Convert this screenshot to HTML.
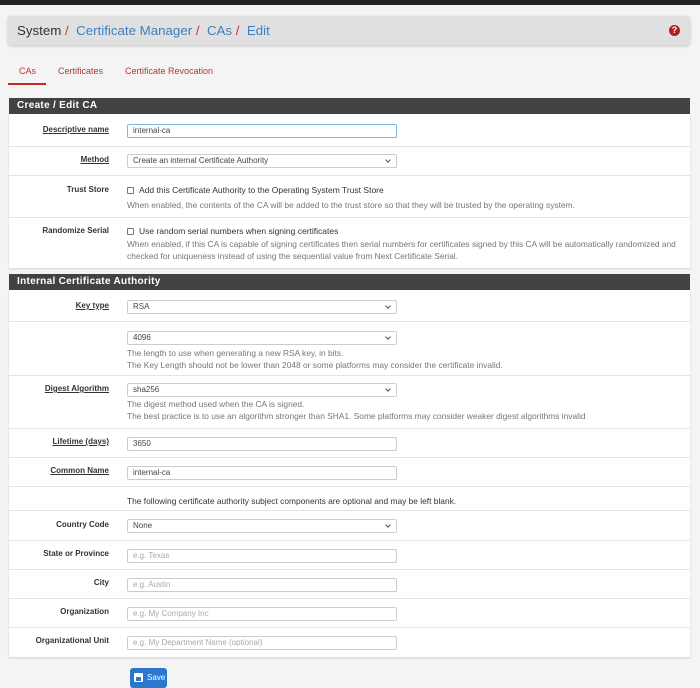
<!DOCTYPE html>
<html><head><meta charset="utf-8"><style>
*{box-sizing:border-box;margin:0;padding:0}
body{width:700px;height:688px;background:#f4f4f4;font-family:"Liberation Sans",sans-serif;position:relative;overflow:hidden;color:#333}
.a{position:absolute}
.top{left:0;top:0;width:700px;height:5px;background:#222}
.bc{left:8px;top:16px;width:682px;height:29px;background:#e0e0e0;border-radius:3px;box-shadow:0 1px 3px rgba(0,0,0,.2);font-size:13.3px;line-height:29px;padding-left:9px;color:#333}
.bc span.l{color:#3c7fc0}.bc span.s{color:#c0392b}
.help{left:669px;top:25px;width:11px;height:11px;border-radius:50%;background:#b71c1c;color:#fff;font-size:9px;font-weight:bold;text-align:center;line-height:11px}
.tab{top:66px;font-size:9px;color:#b03a2e}
.ul{left:8px;top:83px;width:38px;height:2px;background:#c62828}
.ph{left:9px;width:681px;height:16px;background:#424242;color:#fff;font-size:10px;font-weight:bold;line-height:16px;padding-left:8px;letter-spacing:.3px}
.pb{left:9px;width:681px;background:#fff;box-shadow:0 1px 2px rgba(0,0,0,.15)}
.row{position:absolute;left:0;width:681px;border-top:1px solid #e4e4e4}
.row:first-child{border-top:none}
.lb{position:absolute;right:581px;font-size:8px;font-weight:bold;color:#333;white-space:nowrap}
.lb u{text-decoration:underline}
.in{position:absolute;left:118px;width:270px;height:14px;border:1px solid #ccc;border-radius:2px;font-size:8px;line-height:12px;padding-left:5px;color:#444;background:#fff}
.in.f{border-color:#80b3e6}
.in.p{color:#aaa}
.in.sel:after{content:"";position:absolute;right:6px;top:3px;width:3px;height:3px;border-right:1.3px solid #555;border-bottom:1.3px solid #555;transform:rotate(45deg)}
.ht{position:absolute;left:118px;font-size:8.4px;color:#777;line-height:12px;white-space:nowrap}
.ck{position:absolute;left:118px;font-size:8.5px;color:#333;white-space:nowrap}
.ck i{display:inline-block;width:7px;height:7px;border:1px solid #777;border-radius:1px;margin-right:5px;vertical-align:-1px}
.btn{left:130px;top:668px;width:37px;height:20px;background:#2a77d0;border-radius:3px;color:#fff;font-size:8px;line-height:20px;padding-left:17px}
.btn b{position:absolute;left:4px;top:5px;width:9px;height:9px;background:#fff;border-radius:1px}
.btn b:after{content:"";position:absolute;left:2px;top:4px;width:5px;height:4px;background:#2a77d0}
</style></head><body>
<div class="a top"></div>
<div class="a bc">System <span class="s">/</span> &nbsp;<span class="l">Certificate Manager</span> <span class="s">/</span> &nbsp;<span class="l">CAs</span> <span class="s">/</span> &nbsp;<span class="l">Edit</span></div>
<div class="a help">?</div>
<div class="a tab" style="left:19px">CAs</div>
<div class="a tab" style="left:58px">Certificates</div>
<div class="a tab" style="left:125px">Certificate Revocation</div>
<div class="a ul"></div>

<div class="a ph" style="top:98px">Create / Edit CA</div>
<div class="a pb" style="top:114px;height:154px">
 <div class="row" style="top:0;height:32px"><div class="lb" style="top:11px"><u>Descriptive name</u></div><div class="in f" style="top:10px">internal-ca</div></div>
 <div class="row" style="top:32px;height:29px"><div class="lb" style="top:8px"><u>Method</u></div><div class="in sel" style="top:7px">Create an internal Certificate Authority</div></div>
 <div class="row" style="top:61px;height:42px"><div class="lb" style="top:9px">Trust Store</div><div class="ck" style="top:9px"><i></i>Add this Certificate Authority to the Operating System Trust Store</div><div class="ht" style="top:23px">When enabled, the contents of the CA will be added to the trust store so that they will be trusted by the operating system.</div></div>
 <div class="row" style="top:103px;height:51px"><div class="lb" style="top:8px">Randomize Serial</div><div class="ck" style="top:8px"><i></i>Use random serial numbers when signing certificates</div><div class="ht" style="top:20px">When enabled, if this CA is capable of signing certificates then serial numbers for certificates signed by this CA will be automatically randomized and<br>checked for uniqueness instead of using the sequential value from Next Certificate Serial.</div></div>
</div>

<div class="a ph" style="top:274px">Internal Certificate Authority</div>
<div class="a pb" style="top:290px;height:367px">
 <div class="row" style="top:0;height:31px"><div class="lb" style="top:11px"><u>Key type</u></div><div class="in sel" style="top:10px">RSA</div></div>
 <div class="row" style="top:31px;height:54px"><div class="in sel" style="top:9px">4096</div><div class="ht" style="top:25px">The length to use when generating a new RSA key, in bits.<br>The Key Length should not be lower than 2048 or some platforms may consider the certificate invalid.</div></div>
 <div class="row" style="top:85px;height:53px"><div class="lb" style="top:8px"><u>Digest Algorithm</u></div><div class="in sel" style="top:7px">sha256</div><div class="ht" style="top:22px">The digest method used when the CA is signed.<br>The best practice is to use an algorithm stronger than SHA1. Some platforms may consider weaker digest algorithms invalid</div></div>
 <div class="row" style="top:138px;height:29px"><div class="lb" style="top:8px"><u>Lifetime (days)</u></div><div class="in" style="top:8px">3650</div></div>
 <div class="row" style="top:167px;height:29px"><div class="lb" style="top:8px"><u>Common Name</u></div><div class="in" style="top:8px">internal-ca</div></div>
 <div class="row" style="top:196px;height:24px"><div class="ck" style="top:9px;font-size:8.4px">The following certificate authority subject components are optional and may be left blank.</div></div>
 <div class="row" style="top:220px;height:30px"><div class="lb" style="top:9px">Country Code</div><div class="in sel" style="top:8px">None</div></div>
 <div class="row" style="top:250px;height:29px"><div class="lb" style="top:8px">State or Province</div><div class="in p" style="top:8px">e.g. Texas</div></div>
 <div class="row" style="top:279px;height:29px"><div class="lb" style="top:8px">City</div><div class="in p" style="top:8px">e.g. Austin</div></div>
 <div class="row" style="top:308px;height:29px"><div class="lb" style="top:8px">Organization</div><div class="in p" style="top:8px">e.g. My Company Inc</div></div>
 <div class="row" style="top:337px;height:30px"><div class="lb" style="top:8px">Organizational Unit</div><div class="in p" style="top:8px">e.g. My Department Name (optional)</div></div>
</div>
<div class="a btn"><b></b>Save</div>
</body></html>
